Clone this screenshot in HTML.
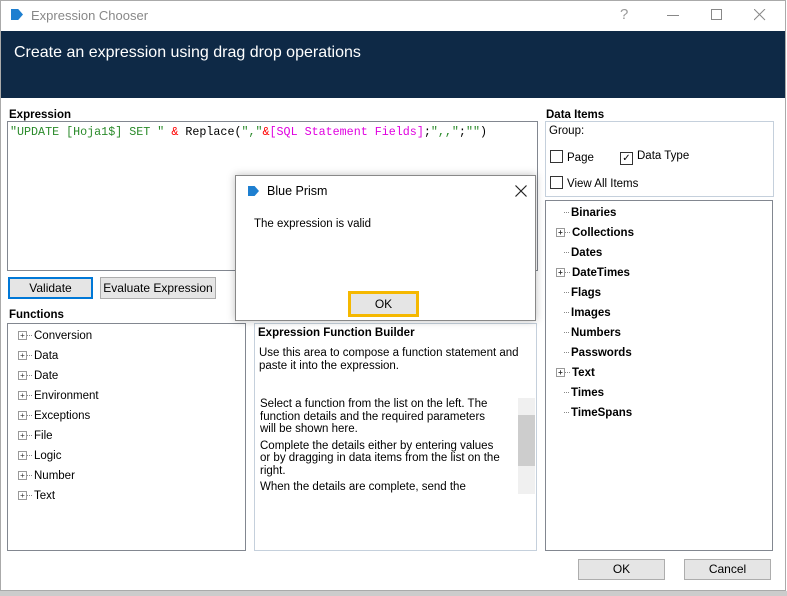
<html><head><style>
body{margin:0;width:787px;height:596px;position:relative;overflow:hidden;background:#fff;font-family:"Liberation Sans",sans-serif;font-size:11.5px;color:#000}
.a{position:absolute}
.box{position:absolute;border:1px solid #828790;background:#fff}
.btn{position:absolute;border:1px solid #adadad;background:#e5e5e5;text-align:center;box-sizing:border-box;font-size:12px}
.b{font-weight:bold}
.pl{display:inline-block;width:7px;height:7px;border:1px solid #999;font-size:8px;line-height:7px;text-align:center;color:#333;margin-right:0;vertical-align:1px;background:#fff;position:relative;z-index:1}
.dt{display:inline-block;width:5px;border-top:1px dotted #888;vertical-align:3px;margin-right:2px}
.tr div{height:20px;line-height:20px}
.cb{display:inline-block;width:11px;height:11px;border:1px solid #333;vertical-align:-2px;margin-right:4px;font-size:10px;line-height:11px;text-align:center}
</style></head><body>
<div class="a" style="left:0;top:0;width:786px;height:591px;border:1px solid #aaa;box-sizing:border-box"></div>
<div class="a" style="left:0;top:591px;width:787px;height:5px;background:#ccc"></div>
<div class="a" style="left:11px;top:9px;width:12px;height:11px;background:#1e7fd0;clip-path:polygon(0 0,60% 0,100% 50%,60% 100%,0 100%)"></div>
<div class="a" style="left:31px;top:8px;color:#888;font-size:13px">Expression Chooser</div>
<div class="a" style="left:620px;top:6px;color:#999;font-size:15px">?</div>
<div class="a" style="left:667px;top:15px;width:12px;height:1px;background:#888"></div>
<div class="a" style="left:711px;top:9px;width:9px;height:9px;border:1px solid #888"></div>
<svg class="a" style="left:754px;top:9px" width="12" height="12"><path d="M0 0L11 11M11 0L0 11" stroke="#888" stroke-width="1"/></svg>
<div class="a" style="left:1px;top:31px;width:784px;height:67px;background:#0e2946"></div>
<div class="a" style="left:14px;top:44px;color:#fff;font-size:16px">Create an expression using drag drop operations</div>
<div class="a b" style="left:9px;top:109px">Expression</div>
<div class="box" style="left:7px;top:121px;width:529px;height:148px"></div>
<div class="a" style="left:10px;top:125px;font-family:'Liberation Mono',monospace;font-size:11.7px;white-space:pre"><span style="color:#2a8a2a">"UPDATE [Hoja1$] SET "</span> <span style="color:red">&amp;</span> Replace(<span style="color:#2a8a2a">","</span><span style="color:red">&amp;</span><span style="color:#e000e0">[SQL Statement Fields]</span>;<span style="color:#2a8a2a">",,"</span>;<span style="color:#2a8a2a">""</span>)</div>
<div class="btn" style="left:8px;top:277px;width:85px;height:22px;border:2px solid #0078d7;line-height:18px">Validate</div>
<div class="btn" style="left:100px;top:277px;width:116px;height:22px;line-height:20px">Evaluate Expression</div>
<div class="a b" style="left:9px;top:309px">Functions</div>
<div class="a" style="left:22px;top:338px;height:158px;border-left:1px dotted #888"></div>
<div class="box tr" style="left:7px;top:323px;width:239px;height:228px;padding:2px 0 0 10px;box-sizing:border-box">
<div><span class="pl">+</span><span class="dt"></span>Conversion</div><div><span class="pl">+</span><span class="dt"></span>Data</div><div><span class="pl">+</span><span class="dt"></span>Date</div><div><span class="pl">+</span><span class="dt"></span>Environment</div><div><span class="pl">+</span><span class="dt"></span>Exceptions</div><div><span class="pl">+</span><span class="dt"></span>File</div><div><span class="pl">+</span><span class="dt"></span>Logic</div><div><span class="pl">+</span><span class="dt"></span>Number</div><div><span class="pl">+</span><span class="dt"></span>Text</div></div>
<div class="a" style="left:254px;top:323px;width:283px;height:228px;border:1px solid #c5d0dc;box-sizing:border-box"></div>
<div class="a b" style="left:258px;top:327px">Expression Function Builder</div>
<div class="a" style="left:259px;top:347px;width:272px;line-height:13px">Use this area to compose a function statement and paste it into the expression.</div>
<div class="a" style="left:260px;top:398px;width:240px;line-height:12.5px">Select a function from the list on the left. The function details and the required parameters will be shown here.<div style="height:4px"></div>Complete the details either by entering values or by dragging in data items from the list on the right.<div style="height:4px"></div>When the details are complete, send the</div>
<div class="a" style="left:518px;top:398px;width:17px;height:96px;background:#f0f0f0"></div>
<div class="a" style="left:518px;top:415px;width:17px;height:51px;background:#cdcdcd"></div>
<div class="a b" style="left:546px;top:109px">Data Items</div>
<div class="a" style="left:545px;top:121px;width:229px;height:76px;border:1px solid #c5d0dc;box-sizing:border-box"></div>
<div class="a" style="left:549px;top:125px">Group:</div>
<div class="a" style="left:550px;top:150px"><span class="cb"></span>Page</div>
<div class="a" style="left:620px;top:150px"><span class="cb">✓</span>Data Type</div>
<div class="a" style="left:550px;top:176px"><span class="cb"></span>View All Items</div>
<div class="a" style="left:560px;top:211px;height:202px;border-left:1px dotted #888"></div>
<div class="box tr b" style="left:545px;top:200px;width:228px;height:351px;padding:2px 0 0 10px;box-sizing:border-box">
<div><span style="display:inline-block;width:8px"></span><span class="dt"></span>Binaries</div><div><span class="pl">+</span><span class="dt"></span>Collections</div><div><span style="display:inline-block;width:8px"></span><span class="dt"></span>Dates</div><div><span class="pl">+</span><span class="dt"></span>DateTimes</div><div><span style="display:inline-block;width:8px"></span><span class="dt"></span>Flags</div><div><span style="display:inline-block;width:8px"></span><span class="dt"></span>Images</div><div><span style="display:inline-block;width:8px"></span><span class="dt"></span>Numbers</div><div><span style="display:inline-block;width:8px"></span><span class="dt"></span>Passwords</div><div><span class="pl">+</span><span class="dt"></span>Text</div><div><span style="display:inline-block;width:8px"></span><span class="dt"></span>Times</div><div><span style="display:inline-block;width:8px"></span><span class="dt"></span>TimeSpans</div></div>
<div class="btn" style="left:578px;top:559px;width:87px;height:21px;line-height:19px">OK</div>
<div class="btn" style="left:684px;top:559px;width:87px;height:21px;line-height:19px">Cancel</div>
<div class="a" style="left:235px;top:175px;width:301px;height:146px;background:#fff;border:1px solid #888;box-sizing:border-box;box-shadow:0 0 8px rgba(0,0,0,.25)"></div>
<div class="a" style="left:248px;top:186px;width:11px;height:10px;background:#1e7fd0;clip-path:polygon(0 0,60% 0,100% 50%,60% 100%,0 100%)"></div>
<div class="a" style="left:267px;top:184px;font-size:12.5px">Blue Prism</div>
<svg class="a" style="left:515px;top:185px" width="12" height="12"><path d="M0.5 0.5L11.5 11.5M11.5 0.5L0.5 11.5" stroke="#222" stroke-width="1.2"/></svg>
<div class="a" style="left:254px;top:218px">The expression is valid</div>
<div class="btn" style="left:348px;top:291px;width:71px;height:26px;border:3px solid #f5b800;background:#e5e5e5;line-height:20px">OK</div>
</body></html>
